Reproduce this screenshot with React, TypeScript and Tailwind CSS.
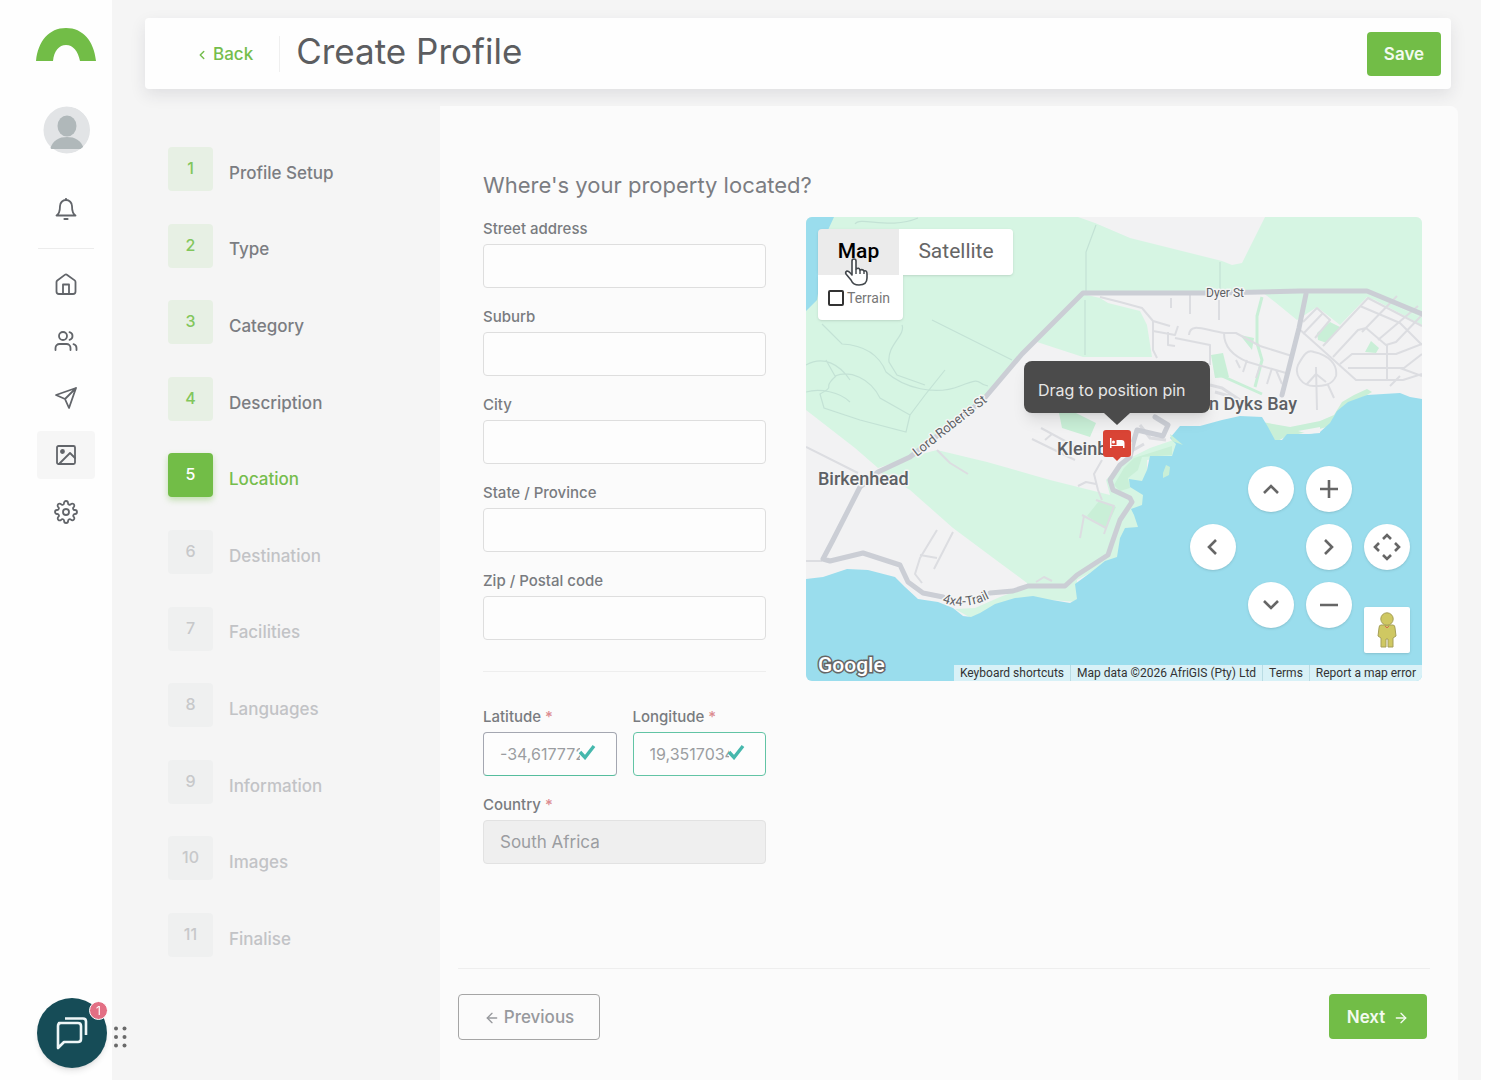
import { ArrowLeft, ArrowRight, ChevronLeft } from "lucide-react";
import type { ReactNode } from "react";

const steps = [
  "Profile Setup", "Type", "Category", "Description", "Location", "Destination",
  "Facilities", "Languages", "Information", "Images", "Finalise",
];

function Icon({ children, size = 24 }: { children: ReactNode; size?: number }) {
  return (
    <svg width={size} height={size} viewBox="0 0 24 24" fill="none" stroke="currentColor" strokeWidth="1.8" strokeLinecap="round" strokeLinejoin="round" aria-hidden="true">
      {children}
    </svg>
  );
}

const navItems = [
  { label: "Home", icon: <Icon><path d="M2.500 10v9.500A2.500 2.500 0 0 0 5 22h14a2.500 2.500 0 0 0 2.500-2.500V10a2 2 0 0 0-.8-1.600l-7.500-5.500a2 2 0 0 0-2.400 0L3.300 8.400a2 2 0 0 0-.8 1.600z" /><path d="M9 21.500V12.500h6v9" /></Icon> },
  { label: "Contacts", icon: <Icon><circle cx="9" cy="7" r="4" /><path d="M1.500 21v-2a4 4 0 0 1 4-4h7a4 4 0 0 1 4 4v2M22.500 21v-2a4 4 0 0 0-3-3.870M15.500 3.130a4 4 0 0 1 0 7.750" /></Icon> },
  { label: "Send", icon: <Icon><path d="M22 2 11.500 12.500M22 2l-7 20-4-9-9-4z" /></Icon> },
  { label: "Gallery", icon: <Icon><rect x="3" y="3" width="18" height="18" rx="1.500" /><circle cx="8.500" cy="8.500" r="1.500" fill="currentColor" /><path d="m21 15-5-5L5 21" /></Icon> },
  { label: "Settings", icon: <Icon><circle cx="12" cy="12" r="3" /><path d="M19.400 15a1.650 1.650 0 0 0 .33 1.820l.06.06a2 2 0 1 1-2.830 2.830l-.06-.06a1.650 1.650 0 0 0-2.800 1.170V21a2 2 0 0 1-4 0v-.09a1.650 1.650 0 0 0-2.900-1.180l-.06.06a2 2 0 1 1-2.830-2.830l.06-.06A1.650 1.650 0 0 0 3.180 14H3a2 2 0 0 1 0-4h.09A1.650 1.650 0 0 0 4.270 7.100l-.06-.06a2 2 0 1 1 2.830-2.830l.06.06A1.650 1.650 0 0 0 10 3.180V3a2 2 0 0 1 4 0v.09a1.650 1.650 0 0 0 2.820 1.180l.06-.06a2 2 0 1 1 2.830 2.830l-.06.06A1.650 1.650 0 0 0 20.910 10H21a2 2 0 0 1 0 4h-.09a1.650 1.650 0 0 0-1.510 1z" /></Icon> },
];

function Sidebar() {
  return (
    <aside className="flex w-28 shrink-0 flex-col items-center bg-[#fefefe] pt-7 pr-4 pl-9 text-[#62656a]">
      <a href="#" aria-label="Dashboard" className="block">
        <svg width="60" height="33" viewBox="0 0 60 33">
          <path d="M0 33C2 13 13 0 30 0s28 13 30 33H44C42 23 37 17 30 17s-12 6-13 16z" fill="#72bd47" />
        </svg>
      </a>
      <button aria-label="Account" className="mt-[45px] h-12 w-12 overflow-hidden rounded-full">
        <svg width="48" height="48" viewBox="0 0 48 48">
          <circle cx="25" cy="24" r="23.500" fill="#e2e4e6" />
          <ellipse cx="25" cy="20" rx="9.500" ry="10.500" fill="#b0b8ba" />
          <path d="M8 43c3-9 9-12 17-12s14 3 17 12z" fill="#b0b8ba" />
        </svg>
      </button>
      <button aria-label="Notifications" className="mt-[43px]">
        <Icon><path d="M18 9a6 6 0 0 0-12 0c0 6-1 8-3.500 9.500h19C19 17 18 15 18 9z" /><path d="M12 2v1M10.500 22h3" strokeWidth="2.200" /></Icon>
      </button>
      <hr className="mt-[27px] w-14 border-[#ececec]" />
      <nav className="mt-[11px] flex flex-col gap-[9px]">
        {navItems.map((item) => (
          <a key={item.label} href="#" aria-label={item.label} className={`flex h-12 w-[58px] items-center justify-center rounded ${item.label === "Gallery" ? "bg-[#f6f6f6]" : ""}`}>
            {item.icon}
          </a>
        ))}
      </nav>
    </aside>
  );
}

function Header() {
  return (
    <header className="mr-[30px] ml-[33px] flex h-[71px] items-center rounded bg-[#fefefe] pr-[10px] pl-[50px] shadow-[0_6px_16px_rgba(40,40,60,0.1)]">
      <a href="#" className="flex items-center gap-1 pt-[3px] text-[17px] font-medium text-[#75bd4c]">
        <ChevronLeft size={14} strokeWidth={2.500} />
        Back
      </a>
      <div className="ml-[26px] h-9 w-px bg-[#efefef]" />
      <h1 className="mb-[6px] ml-4 text-[35px] leading-10 text-[#5c5d60]">Create Profile</h1>
      <button className="ml-auto h-11 w-[74px] rounded bg-[#72bd47] pt-[2px] text-[17px] font-semibold text-[#f3faf0]">Save</button>
    </header>
  );
}

function Steps() {
  return (
    <ol className="mt-[41px] ml-14 flex h-[810px] w-[272px] shrink-0 flex-col justify-between">
      {steps.map((step, i) => {
        const tone = i < 4 ? "bg-[#e7f0e4] text-[#82c65c]" : i === 4 ? "bg-[#72bd47] text-white shadow-[0_3px_6px_rgba(114,189,71,0.4)]" : "bg-[#eff0f0] text-[#c7c8ca]";
        const label = i < 4 ? "text-[#7b7d82]" : i === 4 ? "text-[#75bd4c]" : "text-[#c2c3c6]";
        return (
          <li key={step}>
            <a href="#" className="flex items-center gap-4">
              <span className={`flex h-11 w-[45px] items-center justify-center rounded pb-[2px] text-base font-medium ${tone}`}>{i + 1}</span>
              <span className={`pt-[9px] text-[17px] font-medium ${label}`}>{step}</span>
            </a>
          </li>
        );
      })}
    </ol>
  );
}

function Field({ id, label, required = false, children }: { id: string; label: string; required?: boolean; children: ReactNode }) {
  return (
    <div className="min-w-0 flex-1">
      <label htmlFor={id} className="block h-6 text-[15px] leading-[18px] font-medium text-[#797b80]">
        {label}
        {required && <span className="text-[#dc8b90]"> *</span>}
      </label>
      {children}
    </div>
  );
}

function Coordinate({ id, label, value, border }: { id: string; label: string; value: string; border: string }) {
  return (
    <Field id={id} label={label} required>
      <div className="relative">
        <input id={id} defaultValue={value} className={`h-11 w-full rounded border bg-[#fdfdfd] pr-9 pl-4 text-base text-[#9b9da1] ${border}`} />
        <svg width="18" height="16" viewBox="0 0 18 16" className="absolute top-3 right-[21px]" aria-hidden="true">
          <path d="m2 8 5 5.500L16 2" fill="none" stroke="#46b8ad" strokeWidth="3.400" />
        </svg>
      </div>
    </Field>
  );
}

function LocationForm() {
  return (
    <form className="flex w-[283px] shrink-0 flex-col pt-[3px]">
      <div className="flex flex-col gap-5">
        {["Street address", "Suburb", "City", "State / Province", "Zip / Postal code"].map((label, i) => (
          <Field key={label} id={`address-${i}`} label={label}>
            <input id={`address-${i}`} className="block h-11 w-full rounded border border-[#dedede] bg-[#fdfdfd] px-4 text-[17px]" />
          </Field>
        ))}
      </div>
      <hr className="mt-[31px] border-[#eeeeee]" />
      <div className="mt-9 flex gap-4">
        <Coordinate id="latitude" label="Latitude" value="-34,6177727" border="border-[#a4a7b1] border-b-[#55bd9d]" />
        <Coordinate id="longitude" label="Longitude" value="19,3517034" border="border-[#62c4a5]" />
      </div>
      <div className="mt-5 flex">
        <Field id="country" label="Country" required>
          <input id="country" defaultValue="South Africa" readOnly className="h-11 w-full rounded border border-[#e2e2e2] bg-[#efefef] px-4 text-[17px] text-[#9b9da1]" />
        </Field>
      </div>
    </form>
  );
}

function MapArt() {
  return (
    <svg viewBox="806 217 616 464" preserveAspectRatio="xMidYMid slice" className="absolute inset-0 h-full w-full font-['Roboto',sans-serif]" role="img" aria-label="Map of Kleinbaai and surroundings">
      <rect x="806" y="217" width="616" height="464" fill="#f2f2f3" />
      <g fill="#d6f5e3">
        <path d="M806 217H1078L1095 223 1130 238 1222 261 1232 265 1242 263 1265 217H1422V318L1367 292H1083L1022 354 983 397 917 455 878 468 855 448 806 410z" />
        <path d="M1083 294 1100 298 1108 303 1140 311 1147 325 1152 357H1083L1037 342z" />
        <path d="M1262 292H1367L1422 318V325L1375 300 1367 297 1340 325 1330 317 1317 307 1297 320 1275 302z" />
        <path d="M878 471 910 457 937 450 987 462 1050 480 1110 495 1106 480 1122 462 1150 448 1185 436 1172 456 1147 460V500L1138 527 1120 557 1077 580V602L1052 600 995 606 971 618 955 609 975 608 1000 597 1027 587 1027 583 1000 563 953 528 910 490z" />
      </g>
      <path d="M806 217H834L828 230 817 300 806 311z" fill="#9added" />
      <path d="M1262 297 1257 316V343L1262 360 1255 387M1222 376 1262 394" fill="none" stroke="#c9efd7" strokeWidth="3" />
      <g fill="#c9efd7">
        <path d="M1317 333 1330 322 1340 327 1327 343 1318 340zM1365 352 1371 341 1379 348 1376 353zM1211 355 1223 353 1229 377 1215 378zM1240 335 1254 338 1252 350zM1059 413 1076 413 1096 423 1090 437 1062 428zM1099 501 1116 507 1106 529 1087 516z" />
        <path d="M1262 422 1290 427 1320 421 1334 415 1342 402 1354 395 1367 389 1372 392 1352 404 1340 415 1330 426 1316 430 1285 437 1276 442z" />
        <path d="M1114 485 1124 468 1134 458 1150 453 1172 446 1172 455 1142 457 1138 470 1128 478 1130 488 1120 491z" />
      </g>
      <path d="M806 579 823 577 847 569 868 570 895 577 905 587 918 599 938 602 953 608 963 616 971 617 980 613 995 604 1015 598 1033 596 1052 600 1070 603 1077 599 1075 584 1090 573 1105 561 1117 557 1120 538 1125 528 1138 527 1134 515 1131 509 1142 505 1143 495 1130 487 1129 479 1142 481 1147 470 1150 456 1172 456 1176 444 1170 438 1180 426 1200 426 1222 420 1240 416 1262 417 1268 427 1275 440 1282 440 1287 434 1308 434 1320 432 1330 423 1337 411 1348 402 1367 395 1400 393 1410 397 1422 399V681H806z" fill="#9added" />
      <path d="M1163 473 1166 465 1170 467 1169 475 1163 478zM1170 434 1183 445 1172 441z" fill="#c9efd7" />
      <path d="M1298 431 1320 427 1320 433 1308 434z" fill="#f2f2f3" />
      <g fill="none" stroke="#c3e2d5" strokeWidth="1.200">
        <path d="M932 320 1012 360M822 324 842 344C860 345 878 352 886 372M902 325C906 335 887 345 889 362L897 375 925 385M1096 225 1086 252V292M1085 300V355M1220 262V290M806 365C824 355 840 365 850 380M826 360 835 376C850 370 870 378 880 398L910 415 906 432 860 420 824 408 820 394C838 384 820 390 836 376M886 372C904 388 935 396 960 386S975 384 988 386M910 415 925 395 945 370M855 224C860 216 890 230 918 218M806 392C820 388 840 392 850 402" />
      </g>
      <g fill="none" stroke="#dcdde1" strokeWidth="2" strokeLinejoin="round">
        <path d="M806 561H822M806 447 858 473M937 530 920 558 915 574 922 583M953 532 934 569M920 555 937 558M937 450 950 463 968 474M1032 439 1075 460M1041 428 1078 448M1045 440 1052 434M1078 486 1086 482 1096 484M1102 460 1094 474 1098 490 1102 500M1084 516 1080 538M1082 515 1106 528M1096 500 1114 506 1104 534M1036 582 1044 577 1052 581" />
        <path d="M1100 297 1120 302 1142 308 1153 321 1170 326M1153 331 1175 335 1178 326M1153 321V350L1157 358M1168 332V345L1175 346M1175 338 1210 345V365M1189 335C1190 322 1204 330 1224 333H1236L1260 346 1292 356M1224 333C1224 350 1238 358 1248 362L1286 373M1171 298V308M1190 294V314M1219 300V320M1236 360 1240 368M1247 360 1243 372M1260 366 1256 378M1272 368 1267 384M1276 370 1282 384" />
        <path d="M1298 328 1356 380H1403L1422 374M1303 322 1317 308 1330 320 1315 338M1303 334 1322 314M1323 346 1368 298 1422 326M1333 357 1358 330 1366 328 1386 345 1396 342 1422 315M1340 364 1352 354H1396L1422 344M1348 368H1404L1422 354M1360 306 1400 323 1422 345M1362 332 1397 296M1387 344V380M1378 340 1418 306M1400 368 1422 376M1390 386 1400 376M1298 365C1304 354 1308 349 1314 352 1328 355 1338 364 1336 376 1332 386 1322 386 1314 386 1302 386 1294 375 1298 365zM1316 367 1317 410M1316 374 1307 384M1316 374 1326 382M1328 385 1334 398" />
        <path d="M1130 452 1144 444M1210 385 1222 388 1240 400M1215 392 1236 398M1140 425 1150 438 1166 440" strokeWidth="3" />
      </g>
      <g fill="none" stroke="#cbced5" strokeWidth="5" strokeLinecap="round" strokeLinejoin="round">
        <path d="M1422 314 1367 291H1300L1216 293H1083L1022 354 983 400 910 457 878 472 860 487 833 540 823 559 830 561 863 553 900 565 908 582 923 593 943 597M990 593 1013 591 1028 586H1065L1077 575 1108 555 1112 543 1120 520 1132 502 1130 498 1113 490 1110 480 1120 465 1130 457 1134 440 1137 430 1163 436 1168 425 1155 417" />
        <path d="M1306 294 1299 328 1282 395" />
      </g>
      <g fill="#5d6064" stroke="#f4f5f5" strokeWidth="3" paintOrder="stroke" strokeLinejoin="round">
        <path id="lord-roberts" d="M917 457 993 397" stroke="none" />
        <text fontSize="13"><textPath href="#lord-roberts">Lord Roberts St</textPath></text>
        <text x="1206" y="297" fontSize="12">Dyer St</text>
        <path id="trail" d="M942 602q25 10 52-6" fill="none" stroke="none" />
        <text fontSize="13"><textPath href="#trail">4x4-Trail</textPath></text>
        <g fontSize="18" fontWeight="500">
          <text x="818" y="485">Birkenhead</text>
          <text x="1057" y="455">Kleinbaai</text>
          <text x="1297" y="410" textAnchor="end">Van Dyks Bay</text>
        </g>
      </g>
      <path d="M1103 433q0-3 3-3h22q3 0 3 3v21q0 3-3 3h-7l-4 4-4-4h-7q-3 0-3-3z" fill="#d94435" />
      <path d="M1110 438h1.500v7h5v-5h5q3 0 3 3v5h-1.500v-2h-11.500v2h-1.500z" fill="#fff" />
      <circle cx="1113.500" cy="442" r="1.500" fill="#fff" />
    </svg>
  );
}

const roundButton = "flex h-[46px] w-[46px] items-center justify-center rounded-full bg-white text-[#666] shadow";

function Glyph({ d }: { d: string }) {
  return (
    <svg width="28" height="28" viewBox="0 0 28 28" fill="none" stroke="currentColor" strokeWidth="2.600" aria-hidden="true">
      <path d={d} />
    </svg>
  );
}

function MapView() {
  return (
    <section className="relative h-[464px] min-w-0 flex-1 overflow-hidden rounded-md font-['Roboto',sans-serif]">
      <MapArt />
      <div className="absolute top-[144px] left-[218px] flex h-[52px] w-[186px] items-center rounded-lg bg-[#4b4b4b] pt-[6px] pl-[14px] font-['Inter',sans-serif] text-base text-[#e6e6e6] shadow-lg">
        Drag to position pin
        <svg width="26" height="12" viewBox="0 0 26 12" className="absolute top-[52px] left-20"><path d="M0 0h26L13 12z" fill="#4b4b4b" /></svg>
      </div>
      <div className="absolute top-3 left-3 text-[21px]">
        <div className="flex h-[46px] rounded-sm shadow">
          <button className="w-[81px] rounded-tl-sm bg-[#ebebeb] font-medium text-black">Map</button>
          <button className="w-[114px] rounded-r-sm bg-white text-[#666]">Satellite</button>
        </div>
        <label className="flex h-[45px] w-[85px] items-center gap-[3px] rounded-b-sm bg-white pl-[10px] text-sm text-[#777] shadow">
          <input type="checkbox" className="h-4 w-4 appearance-none rounded-xs border-2 border-[#333]" />
          Terrain
        </label>
        <svg width="24" height="30" viewBox="0 0 24 30" className="absolute top-7 left-[26px]" aria-hidden="true">
          <path d="M8 16V4q0-2 2-2t2 2v8q3-2 4 1 3-1 4 1 3-1 3 3v4q0 7-8 7-6 0-8-5l-5-6q-1-2 1-3 2 0 5 4z" fill="#fff" stroke="#42474c" strokeWidth="1.600" strokeLinejoin="round" />
          <path d="M12 12v5m4-4v4m4-3v3" stroke="#42474c" strokeWidth="1.400" />
        </svg>
      </div>
      <div className="absolute right-3 bottom-[53px] grid grid-cols-4 gap-3">
        <button aria-label="Move up" className={`${roundButton} col-start-2`}><Glyph d="m7 18 7-7 7 7" /></button>
        <button aria-label="Zoom in" className={roundButton}><Glyph d="M5 14h18M14 5v18" /></button>
        <button aria-label="Move left" className={`${roundButton} col-start-1`}><Glyph d="m17 7-7 7 7 7" /></button>
        <button aria-label="Move right" className={`${roundButton} col-start-3`}><Glyph d="m10 7 7 7-7 7" /></button>
        <button aria-label="Camera controls" className={roundButton}><Glyph d="m10 6 4-4 4 4M10 22l4 4 4-4M6 10l-4 4 4 4M22 10l4 4-4 4" /></button>
        <button aria-label="Move down" className={`${roundButton} col-start-2`}><Glyph d="m7 10 7 7 7-7" /></button>
        <button aria-label="Zoom out" className={roundButton}><Glyph d="M5 14h18" /></button>
      </div>
      <button aria-label="Street View" className="absolute right-3 bottom-7 flex h-[46px] w-[46px] items-center justify-center rounded-xs bg-white shadow">
        <svg width="20" height="36" viewBox="0 0 20 36" fill="#cfc862" stroke="#a59f58">
          <path d="M4 13h12q2 0 2 3l1 8-3 2v9h-5v-8H9v8H4v-9l-3-2 1-8q0-3 2-3z" />
          <circle cx="10" cy="7" r="6.200" />
          <path d="m8 14 2 2 2-2" stroke="#d46a52" />
        </svg>
      </button>
      <a href="#" className="absolute bottom-0 left-[11px]" aria-label="Google">
        <svg width="76" height="32" viewBox="0 0 76 32"><text x="1" y="23" fontSize="21" fontWeight="500" fill="#fff" stroke="#666" strokeWidth="3" paintOrder="stroke" fontFamily="Roboto, sans-serif">Google</text></svg>
      </a>
      <div className="absolute right-0 bottom-0 flex h-4 bg-[#d8f1f7] text-xs leading-4 text-[#333]">
        <button className="px-[6px]">Keyboard shortcuts</button>
        <span className="border-l border-[#b9dce4] px-[6px]">Map data ©2026 AfriGIS (Pty) Ltd</span>
        <a href="#" className="border-l border-[#b9dce4] px-[6px]">Terms</a>
        <a href="#" className="border-l border-[#b9dce4] px-[6px]">Report a map error</a>
      </div>
    </section>
  );
}

function ChatWidget() {
  return (
    <div className="fixed bottom-3 left-[37px] flex items-center gap-[6px]">
      <button aria-label="Open chat, 1 unread" className="relative flex h-[70px] w-[70px] items-center justify-center rounded-full bg-[#164c57] shadow-md">
        <svg width="34" height="34" viewBox="0 0 34 34" fill="none" stroke="#eef6f7" strokeWidth="2.600" strokeLinejoin="round" aria-hidden="true">
          <path d="M4 7h19q3 0 3 3v13q0 3-3 3H9l-6 6V10q0-3 3-3z" />
          <path d="M10 2.500h18q3 0 3 3V19" />
        </svg>
        <span className="absolute top-[3px] -right-px flex h-[19px] w-[19px] items-center justify-center rounded-full border border-white bg-[#e36f84] text-xs text-white">1</span>
      </button>
      <svg width="14" height="22" viewBox="0 0 14 22" fill="#6a6a6a" aria-hidden="true" className="mt-2">
        <circle cx="3" cy="2.500" r="2" /><circle cx="11.500" cy="2.500" r="2" />
        <circle cx="3" cy="11" r="2" /><circle cx="11.500" cy="11" r="2" />
        <circle cx="3" cy="19.500" r="2" /><circle cx="11.500" cy="19.500" r="2" />
      </svg>
    </div>
  );
}

export default function App() {
  return (
    <div className="flex min-h-screen bg-[#fefefe] pr-[19px] font-['Inter',sans-serif]">
      <Sidebar />
      <main className="flex min-w-0 flex-1 flex-col bg-[#f5f5f5] pt-[18px]">
        <Header />
        <div className="mt-[17px] flex flex-1">
          <Steps />
          <section className="mr-[23px] flex min-w-0 flex-1 flex-col rounded-tr-lg bg-[#fbfbfb] pt-16 pb-10">
            <h2 className="ml-[43px] h-[47px] text-[22px] leading-[30px] text-[#7b7d82]">Where's your property located?</h2>
            <div className="mr-9 ml-[43px] flex gap-10">
              <LocationForm />
              <MapView />
            </div>
            <footer className="mt-auto mr-7 ml-[18px] flex justify-between border-t border-[#eeeeee] pt-[25px]">
              <button className="flex h-[46px] w-[142px] items-center justify-center gap-1 rounded border border-[#a5a5a5] pt-[2px] text-[17px] font-medium text-[#97999d]">
                <ArrowLeft size={16} />
                Previous
              </button>
              <button className="mr-[3px] flex h-[45px] w-[98px] items-center justify-center gap-2 rounded bg-[#72bd47] pt-[2px] text-[17px] font-semibold text-[#f3faf0]">
                Next
                <ArrowRight size={16} />
              </button>
            </footer>
          </section>
        </div>
      </main>
      <ChatWidget />
    </div>
  );
}
